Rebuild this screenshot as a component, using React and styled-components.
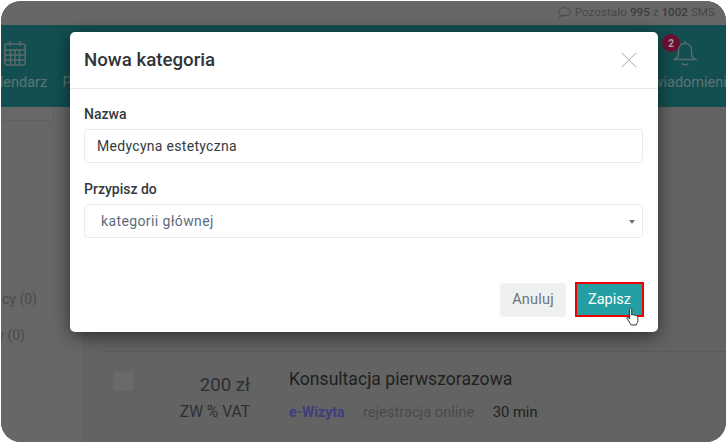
import React from 'react'
import styled, { createGlobalStyle } from 'styled-components'
import { X } from 'lucide-react'

const Global = createGlobalStyle`
    html, body { margin: 0; padding: 0; background: #fff; }
    * { box-sizing: border-box; }
    body { font-family: Roboto, "Liberation Sans", sans-serif; }
`
const Page = styled.div`
    position: relative;
    width: 727px;
    height: 443px;
    overflow: hidden;
    background: #fff;
`
const Frame = styled.div`
    width: 725px;
    height: 441px;
    margin: 1px 0 0 1px;
    border-radius: 20px;
    overflow: hidden;
    display: flex;
    flex-direction: column;
    background: #646464;
`
const TopBar = styled.div`
    height: 24px;
    flex: none;
    background: #676767;
    display: flex;
    align-items: center;
    justify-content: flex-end;
    gap: 4px;
    padding: 0 11px 2px 0;
    font-size: 11.7px;
    color: #474948;
`
const Strong = styled.span`
    color: #3a3c3b;
    font-weight: 500;
`
const Nav = styled.div`
    height: 82px;
    flex: none;
    background: #134f50;
    display: flex;
    justify-content: space-between;
    overflow: hidden;
`
const NavGroup = styled.div`
    display: flex;
`
const NavItem = styled.div`
    position: relative;
    flex: none;
    width: ${p => p.$width}px;
    margin-left: ${p => p.$left || 0}px;
    margin-right: ${p => p.$right || 0}px;
    display: flex;
    flex-direction: column;
    align-items: center;
    padding-top: 15px;
    font-size: 14.5px;
    color: #5c7575;
    white-space: nowrap;
`
const NavIcon = styled.svg`
    width: 24px;
    height: 26px;
    margin-bottom: 8px;
    fill: none;
    stroke: #5a6b6b;
    stroke-width: 1.5;
`
const NavSpacer = styled.div`
    height: 34px;
`
const Badge = styled.span`
    position: absolute;
    top: 9px;
    left: 27px;
    width: 18px;
    height: 18px;
    border-radius: 50%;
    background: #6d0f35;
    color: #a9a9a9;
    font-size: 10px;
    font-weight: 700;
    display: flex;
    align-items: center;
    justify-content: center;
`
const Body = styled.div`
    flex: 1;
    display: flex;
    min-height: 0;
`
const Side = styled.div`
    width: 82px;
    flex: none;
    background: #666766;
    display: flex;
    flex-direction: column;
`
const SideCard = styled.div`
    width: 53px;
    height: 14px;
    flex: none;
    background: #686868;
    border-right: 1px solid #616161;
    border-bottom: 1px solid #616161;
    border-bottom-right-radius: 4px;
`
const SideList = styled.div`
    display: flex;
    flex-direction: column;
    align-items: flex-end;
    padding-top: 169px;
    gap: 18px;
    font-size: 14px;
    line-height: 18px;
    color: #4a4c4c;
    white-space: nowrap;
`
const SideItem = styled.span`
    margin-right: ${p => p.$right}px;
`
const Main = styled.div`
    flex: 1;
    background: #636363;
    padding: 244px 0 0 17px;
`
const Row = styled.div`
    border-top: 1px solid #5b5b5b;
    display: flex;
    padding: 19px 0 0 13px;
`
const Check = styled.div`
    width: 21px;
    height: 20px;
    background: #6a6a6a;
    border: 1px solid #666;
    flex: none;
`
const Price = styled.div`
    width: 116px;
    flex: none;
    text-align: right;
    color: #2c3034;
`
const Amount = styled.div`
    font-size: 18.6px;
    line-height: 24px;
    margin-top: 2px;
`
const Vat = styled.div`
    font-size: 15.6px;
    line-height: 20px;
    margin-top: 5px;
`
const Service = styled.div`
    margin-left: 39px;
    margin-top: -4px;
`
const ServiceTitle = styled.div`
    font-size: 17.6px;
    line-height: 24px;
    color: #1f1f1f;
`
const Meta = styled.div`
    display: flex;
    gap: 18.5px;
    line-height: 20px;
    margin-top: 11px;
`
const MetaText = styled.span`
    color: ${p => p.color};
    font-size: ${p => p.$bold ? 14 : 14.7}px;
    font-weight: ${p => p.$bold ? 700 : 400};
`
const Modal = styled.div`
    position: absolute;
    left: 70px;
    top: 32px;
    width: 588px;
    height: 300px;
    background: #fff;
    border-radius: 5px;
    box-shadow: 0 4px 18px rgba(0, 0, 0, .55);
    display: flex;
    flex-direction: column;
`
const Header = styled.div`
    height: 57px;
    flex: none;
    border-bottom: 1px solid #e9e9e9;
    display: flex;
    align-items: center;
    justify-content: space-between;
    padding: 0 15px 0 14px;
`
const Title = styled.div`
    font-size: 18.7px;
    font-weight: 500;
    color: #2f3437;
`
const Form = styled.div`
    flex: 1;
    padding: 16px 15px 0 14px;
    display: flex;
    flex-direction: column;
`
const Label = styled.div`
    font-size: 14px;
    font-weight: 500;
    line-height: 18px;
    color: #343a40;
    margin-bottom: 6px;
`
const Field = styled.div`
    position: relative;
    height: 34px;
    border: 1px solid #e9ecef;
    border-radius: 4px;
    display: flex;
    align-items: center;
    padding-left: ${p => p.$select ? 16 : 12}px;
    font-size: 14px;
    letter-spacing: ${p => p.$select ? .38 : .3}px;
    color: ${p => p.$select ? '#5d6b7d' : '#343a40'};
    margin-bottom: 17px;
`
const Caret = styled.span`
    position: absolute;
    right: 7px;
    top: 15px;
    border-left: 3.5px solid transparent;
    border-right: 3.5px solid transparent;
    border-top: 4px solid #777;
`
const Footer = styled.div`
    display: flex;
    justify-content: flex-end;
    align-items: center;
    gap: 9px;
    padding: 0 14px 15px 0;
`
const Button = styled.div`
    width: ${p => p.$primary ? 69 : 66}px;
    height: ${p => p.$primary ? 35 : 34}px;
    border-radius: ${p => p.$primary ? 0 : 4}px;
    display: flex;
    align-items: center;
    justify-content: center;
    font-size: 14.5px;
    letter-spacing: ${p => p.$primary ? 0 : .2}px;
    background: ${p => p.$primary ? '#24a0a4' : '#eff0f0'};
    color: ${p => p.$primary ? '#fff' : '#6c757d'};
    border: ${p => p.$primary ? '2px solid #f00000' : 'none'};
`
const Pointer = styled.svg`
    position: absolute;
    left: 626px;
    top: 307px;
`

export default function App() {
    return (
        <Page>
            <Global />
            <Frame>
                <TopBar>
                    <svg width="13" height="11" viewBox="0 0 13 11" fill="none" stroke="#474948" strokeWidth="1">
                        <path d="M6.700 .7c3.200 0 5.700 1.800 5.700 4s-2.500 4-5.700 4c-.8 0-1.500-.1-2.200-.3L1.600 10l.8-2.500C1.300 6.800.7 5.800.7 4.700c0-2.200 2.800-4 6-4z" />
                    </svg>
                    <span>Pozostało <Strong>995</Strong> z <Strong>1002</Strong> SMS</span>
                </TopBar>
                <Nav>
                    <NavGroup>
                        <NavItem $width={70} $left={-21}>
                            <NavIcon viewBox="0 0 24 26">
                                <rect x="1.800" y="4" width="20.400" height="21" rx="2.500" />
                                <path d="M7 1v5M17 1v5M2 10h20M2 15h20M2 20h20M7.500 10v15M12 10v15M16.500 10v15" />
                            </NavIcon>
                            <span>Kalendarz</span>
                        </NavItem>
                        <NavItem $width={70} $left={5}>
                            <NavSpacer />
                            <span>Pacjenci</span>
                        </NavItem>
                    </NavGroup>
                    <NavItem $width={100} $right={-9}>
                        <NavIcon viewBox="0 0 24 26">
                            <path d="M12 1v2.500M12 3.500c-4 0-6.500 3-6.500 7v3.500c0 2.500-1.500 4-4 5.500h21c-2.500-1.500-4-3-4-5.500v-3.500c0-4-2.500-7-6.500-7zM9 23.500c1.500 1.600 4.500 1.600 6 0" />
                        </NavIcon>
                        <Badge>2</Badge>
                        <span>Powiadomienia</span>
                    </NavItem>
                </Nav>
                <Body>
                    <Side>
                        <SideCard />
                        <SideList>
                            <SideItem $right={46}>cy (0)</SideItem>
                            <SideItem $right={58}>y (0)</SideItem>
                        </SideList>
                    </Side>
                    <Main>
                        <Row>
                            <Check />
                            <Price>
                                <Amount>200 zł</Amount>
                                <Vat>ZW % VAT</Vat>
                            </Price>
                            <Service>
                                <ServiceTitle>Konsultacja pierwszorazowa</ServiceTitle>
                                <Meta>
                                    <MetaText color="#3f3d7c" $bold>e-Wizyta</MetaText>
                                    <MetaText color="#4a4a4a">rejestracja online</MetaText>
                                    <MetaText color="#202020">30 min</MetaText>
                                </Meta>
                            </Service>
                        </Row>
                    </Main>
                </Body>
            </Frame>
            <Modal>
                <Header>
                    <Title>Nowa kategoria</Title>
                    <X size={28} strokeWidth={0.9} color="#b5b5b5" />
                </Header>
                <Form>
                    <Label>Nazwa</Label>
                    <Field>Medycyna estetyczna</Field>
                    <Label>Przypisz do</Label>
                    <Field $select>kategorii głównej<Caret /></Field>
                </Form>
                <Footer>
                    <Button>Anuluj</Button>
                    <Button $primary>Zapisz</Button>
                </Footer>
            </Modal>
            <Pointer width="14" height="19" viewBox="0 0 14 19">
                <path d="M4 1.200c.8-.6 1.700 0 1.700 1V8l1-.3 1 .1 1 .3 1 .3 1 .4c1 .6 1.200 1.400 1.200 2.400v2.600c0 1.200-.5 2-1.200 3l-.5 1.200H5.200L2.600 14 1 11.400c-.4-.8.300-1.600 1.200-1.200L3.600 12V2.200c0-.4.100-.8.400-1z" fill="#fff" stroke="#222" strokeWidth=".9" />
            </Pointer>
        </Page>
    )
}
